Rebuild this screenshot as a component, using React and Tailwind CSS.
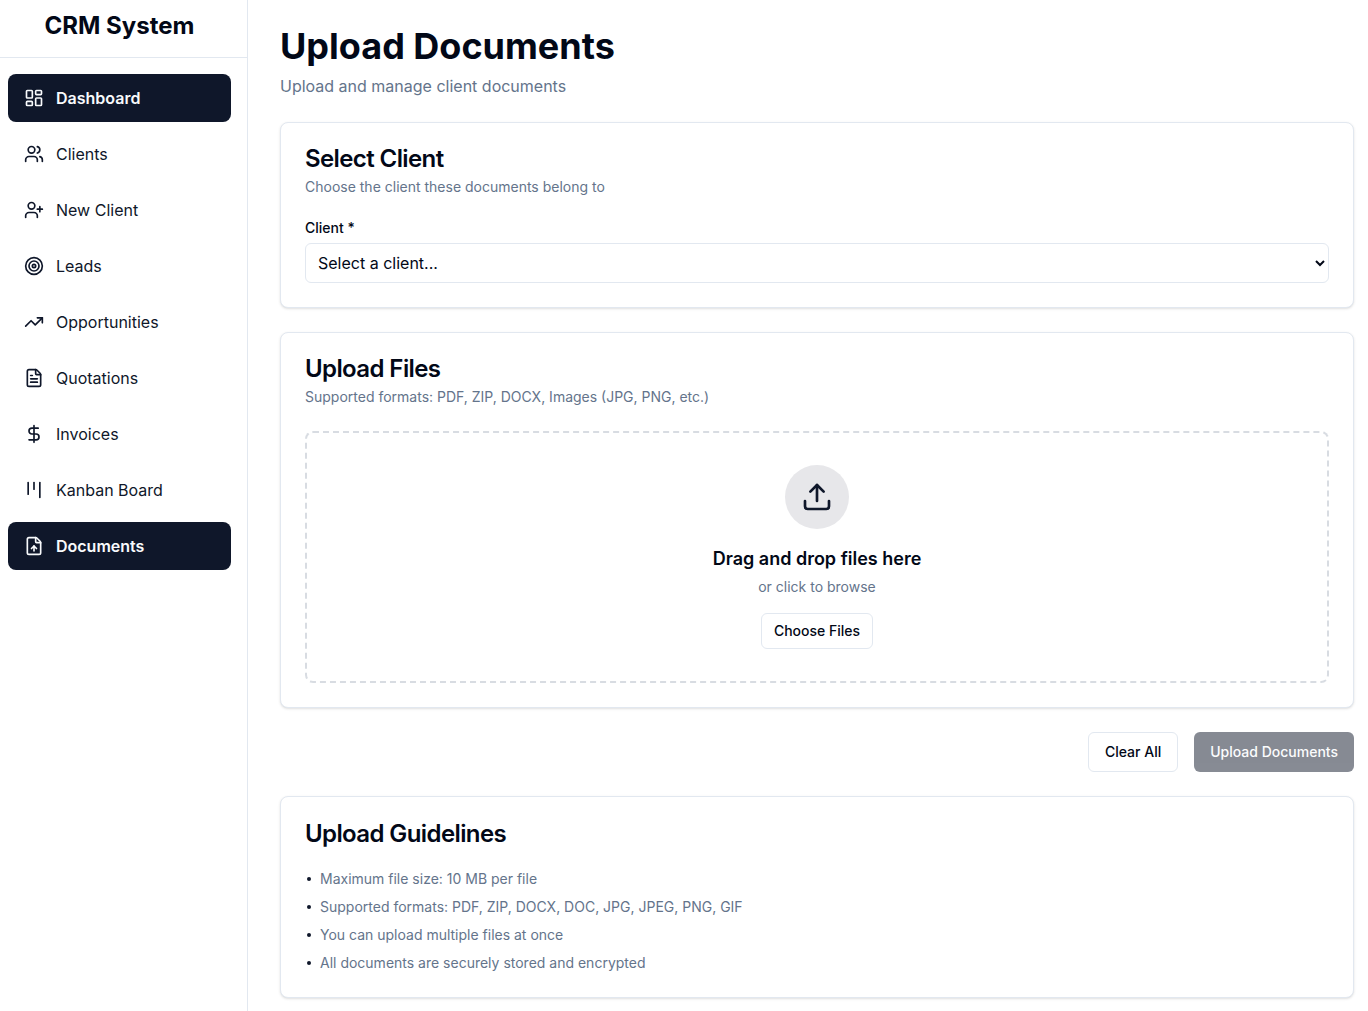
import React from 'react';
import { LayoutDashboard, Users, UserPlus, Target, TrendingUp, FileText, DollarSign, Kanban, FileUp, Upload } from 'lucide-react';

const navItems = [
  { label: 'Dashboard', icon: LayoutDashboard, active: true },
  { label: 'Clients', icon: Users },
  { label: 'New Client', icon: UserPlus },
  { label: 'Leads', icon: Target },
  { label: 'Opportunities', icon: TrendingUp },
  { label: 'Quotations', icon: FileText },
  { label: 'Invoices', icon: DollarSign },
  { label: 'Kanban Board', icon: Kanban },
  { label: 'Documents', icon: FileUp, active: true },
];

const guidelines = [
  'Maximum file size: 10 MB per file',
  'Supported formats: PDF, ZIP, DOCX, DOC, JPG, JPEG, PNG, GIF',
  'You can upload multiple files at once',
  'All documents are securely stored and encrypted',
];

const Card = ({ title, subtitle, children, className }) => (
  <div className={`rounded-lg border border-[#e2e8f0] bg-white px-6 shadow-sm ${className}`}>
    <h3 className="text-2xl leading-6 font-semibold tracking-tight text-[#020817]">{title}</h3>
    {subtitle && <p className="mt-[6px] text-sm leading-5 text-[#64748b]">{subtitle}</p>}
    {children}
  </div>
);

const App = () => {
  return (
    <div className="flex h-[1011px] overflow-hidden bg-white font-['Inter',sans-serif] text-[#020817]">
      <aside className="w-[248px] shrink-0 border-r border-[#e2e8f0]">
        <div className="flex h-[58px] items-start justify-center border-b border-[#e2e8f0] pr-2 pt-[10px]">
          <h1 className="text-2xl leading-8 font-bold">CRM System</h1>
        </div>
        <nav className="flex flex-col gap-2 px-2 pt-4">
          {navItems.map((item) => {
            const Icon = item.icon;
            return (
              <a
                key={item.label}
                className={`flex h-12 w-[223px] items-center gap-3 rounded-lg px-4 text-base ${
                  item.active ? 'bg-[#0f172a] font-semibold text-[#f8fafc]' : 'text-[#0f172a]'
                }`}
              >
                <Icon size={20} strokeWidth={2} />
                <span>{item.label}</span>
              </a>
            );
          })}
        </nav>
      </aside>

      <main className="min-w-0 flex-1 pl-8 pr-[14px] pt-6">
        <h2 className="text-4xl leading-[44px] font-bold text-[#020817]">Upload Documents</h2>
        <p className="mt-[6px] text-base leading-6 text-[#64748b]">Upload and manage client documents</p>

        <Card title="Select Client" subtitle="Choose the client these documents belong to" className="mt-6 h-[186px] pt-6">
          <label className="mt-6 block text-sm leading-[14px] font-medium">Client *</label>
          <select className="mt-2 h-10 w-full rounded-md border border-[#e2e8f0] bg-white px-2 text-base text-[#020817]">
            <option>Select a client...</option>
          </select>
        </Card>

        <Card title="Upload Files" subtitle="Supported formats: PDF, ZIP, DOCX, Images (JPG, PNG, etc.)" className="mt-6 h-[376px] pt-6">
          <div className="mt-6 flex h-[252px] flex-col items-center rounded-lg border-2 border-dashed border-[#64748b]/25 pt-8">
            <div className="flex h-16 w-16 items-center justify-center rounded-full bg-[#e7e7ea] text-[#0f172a]">
              <Upload size={32} strokeWidth={2} />
            </div>
            <p className="mt-4 text-lg leading-7 font-semibold">Drag and drop files here</p>
            <p className="mt-1 text-sm leading-5 text-[#64748b]">or click to browse</p>
            <button className="mt-4 h-9 rounded-md border border-[#e2e8f0] bg-white px-3 text-sm font-medium">Choose Files</button>
          </div>
        </Card>

        <div className="mt-6 flex justify-end gap-4">
          <button className="h-10 rounded-md border border-[#e2e8f0] bg-white px-4 text-sm font-medium">Clear All</button>
          <button className="h-10 rounded-md bg-[#0f172a] px-4 text-sm font-medium text-[#f8fafc] opacity-50">Upload Documents</button>
        </div>

        <Card title="Upload Guidelines" className="mt-6 h-[202px] pt-[25px]">
          <ul className="mt-[23px] flex flex-col gap-2">
            {guidelines.map((text) => (
              <li key={text} className="flex items-center text-sm leading-5 text-[#64748b]">
                <span className="ml-[2px] mr-[9px] h-1 w-1 rounded-full bg-[#0f172a]" />
                {text}
              </li>
            ))}
          </ul>
        </Card>
      </main>
    </div>
  );
};

export default App;
